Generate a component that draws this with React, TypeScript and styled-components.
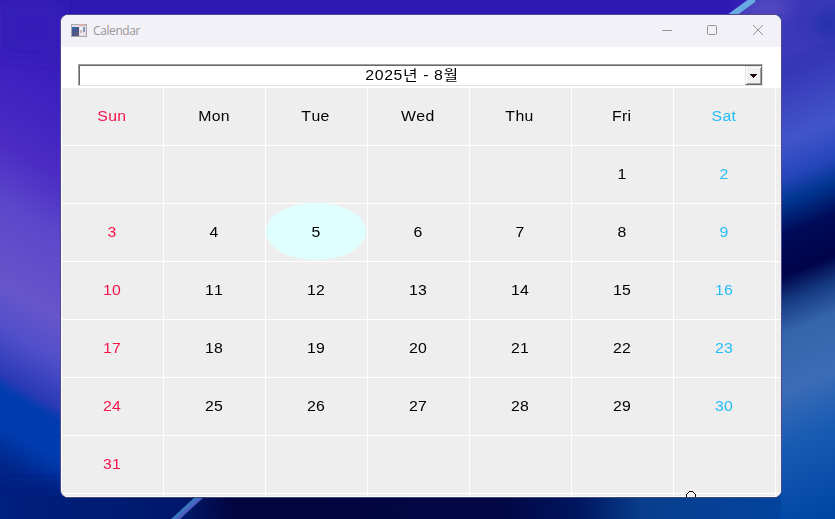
import React from 'react';
import styled, { createGlobalStyle, css } from 'styled-components';

const GlobalStyle = createGlobalStyle`
  * { box-sizing: border-box; }
  body { margin: 0; overflow: hidden; }
`;

const Desktop = styled.div`
  position: relative;
  width: 835px;
  height: 519px;
  padding: 14px 0 0 60px;
  overflow: hidden;
  background: #2f19b3;
`;

const WallpaperArt = styled.svg`
  position: absolute;
  inset: 0;
`;

const Window = styled.main`
  position: relative;
  display: flex;
  flex-direction: column;
  width: 722px;
  height: 484px;
  border: 1px solid #51498f;
  border-bottom-color: #3f4a72;
  border-radius: 8px;
  background: #fff;
  overflow: hidden;
`;

const TitleBar = styled.header`
  display: flex;
  flex: 0 0 32px;
  align-items: center;
  padding-left: 10px;
  background: #f3f1f8;
`;

const Title = styled.h1`
  flex: 1;
  margin: 0 0 0 6px;
  color: #9b9696;
  font: 400 12px/16px 'Open Sans', 'Noto Sans', sans-serif;
  letter-spacing: -0.4px;
`;

const WindowControls = styled.div`
  display: flex;
  margin-right: 0.5px;
`;

const WindowButton = styled.button`
  display: grid;
  place-items: center;
  width: 45.5px;
  height: 32px;
  padding: 0 0 2px;
  border: 0;
  background: none;
  color: #989494;
`;

const Toolbar = styled.div`
  flex: 0 0 40px;
  padding: 17px 18px 0 17px;
`;

const Combo = styled.div`
  display: flex;
  width: 685px;
  height: 22px;
  border: 1px solid;
  border-color: #a0a0a0 #e3e3e3 #e3e3e3 #a0a0a0;
  box-shadow: inset 1px 1px #696969;
`;

const glyphs = css`
  font-family: 'Liberation Sans', 'Noto Sans CJK KR', sans-serif;
  font-size: 14px;
  font-kerning: none;
  letter-spacing: 0.3px;
  transform: scaleX(1.13);
`;

const ComboValue = styled.span`
  flex: 1;
  color: #000;
  line-height: 20px;
  text-align: center;
  ${glyphs}
  letter-spacing: 0.55px;
`;

const DropButton = styled.button`
  display: grid;
  place-items: center;
  width: 17px;
  height: 19px;
  margin: 1px 0 0;
  padding: 1px 0 0;
  border: 1px solid;
  border-color: #e3e3e3 #696969 #696969 #e3e3e3;
  background: #f0f0f0;
  box-shadow: inset 1px 1px #fff, inset -1px -1px #a0a0a0;
`;

const Month = styled.section`
  display: grid;
  grid-template-columns: repeat(7, 102px) 1fr;
  grid-template-rows: repeat(7, 58px) 1fr;
  flex: 1;
  min-height: 0;
  padding-left: 1px;
  margin-top: 1px;
`;

const Cell = styled.div<{ $tone?: string }>`
  display: flex;
  align-items: center;
  justify-content: center;
  border: 0 solid #fff;
  border-width: 0 1px 1px 0;
  background: #eee;
  color: ${({ $tone }) => $tone ?? '#000'};
`;

const Edge = styled(Cell)`
  border-right: 0;
`;

const Label = styled.span<{ $heading?: boolean }>`
  position: relative;
  line-height: 18px;
  margin: 0 ${({ $heading }) => ($heading ? '1.2px' : '0.4px')} 2px 0;
  ${glyphs}
`;

const TodayCell = styled(Cell)`
  position: relative;

  &::before {
    content: '';
    position: absolute;
    left: 0;
    top: -1px;
    width: 100px;
    height: 57px;
    border-radius: 50%;
    background: #e0ffff;
  }
`;

const Spinner = styled.svg`
  position: absolute;
  left: 625px;
  top: 475px;
`;

const SUNDAY = '#f5154a';
const SATURDAY = '#26bcf8';
const DAYS = ['Sun', 'Mon', 'Tue', 'Wed', 'Thu', 'Fri', 'Sat'];
const FIRST_WEEKDAY = 5;
const TODAY = 5;
const toneOf = (column: number) =>
  column === 0 ? SUNDAY : column === 6 ? SATURDAY : undefined;

const Wallpaper = () => (
  <WallpaperArt width="835" height="519" viewBox="0 0 835 519" aria-hidden="true">
    <defs>
      <linearGradient id="left" x1="0" y1="0" x2="0" y2="519" gradientUnits="userSpaceOnUse">
        <stop offset="0" stopColor="#321ab4" />
        <stop offset=".15" stopColor="#3d20c0" />
        <stop offset=".3" stopColor="#4a2bc4" />
        <stop offset=".42" stopColor="#5c47ca" />
        <stop offset=".58" stopColor="#6755cb" />
        <stop offset=".66" stopColor="#514fca" />
        <stop offset=".75" stopColor="#2b3ab5" />
        <stop offset=".78" stopColor="#003cae" />
        <stop offset=".85" stopColor="#003caf" />
        <stop offset=".92" stopColor="#00278b" />
        <stop offset="1" stopColor="#001d7a" />
      </linearGradient>
      <linearGradient id="right" x1="0" y1="0" x2="0" y2="519" gradientUnits="userSpaceOnUse">
        <stop offset="0" stopColor="#3b38b9" />
        <stop offset=".12" stopColor="#3537b5" />
        <stop offset=".25" stopColor="#4355ca" />
        <stop offset=".32" stopColor="#2646bc" />
        <stop offset=".37" stopColor="#00358f" />
        <stop offset=".43" stopColor="#000b59" />
        <stop offset=".51" stopColor="#000449" />
        <stop offset=".56" stopColor="#153a82" />
        <stop offset=".62" stopColor="#3464ab" />
        <stop offset=".73" stopColor="#3d6cb6" />
        <stop offset=".84" stopColor="#175bb3" />
        <stop offset="1" stopColor="#0046a5" />
      </linearGradient>
      <linearGradient id="bottom" x1="0" y1="0" x2="835" y2="0" gradientUnits="userSpaceOnUse">
        <stop offset="0" stopColor="#00207e" />
        <stop offset=".22" stopColor="#00186b" />
        <stop offset=".28" stopColor="#02043e" />
        <stop offset=".6" stopColor="#020744" />
        <stop offset=".69" stopColor="#00155f" />
        <stop offset=".77" stopColor="#093e8d" />
        <stop offset="1" stopColor="#0046a5" />
      </linearGradient>
      <filter id="soft" x="-50%" y="-50%" width="200%" height="200%">
        <feGaussianBlur stdDeviation="8" />
      </filter>
      <filter id="edge"><feGaussianBlur stdDeviation=".6" /></filter>
    </defs>
    <rect width="835" height="519" fill="#2f19b3" />
    <rect width="100" height="640" fill="url(#left)" transform="translate(0 -16) skewY(30)" />
    <path d="M0 0H62V60L0 55Z" fill="#351bb9" filter="url(#soft)" />
    <path d="M0 485H70V519H0Z" fill="#001f80" filter="url(#soft)" />
    <path d="M752 0H835V519H728V15Z" fill="#0046a5" />
    <g transform="translate(0 328) skewY(-22)">
      <rect x="781" y="0" width="60" height="519" fill="url(#right)" />
    </g>
    <path d="M752 0H835V40L781 60V15H728Z" fill="#3b38b9" />
    <path d="M754 0H792L781 18L735 15Z" fill="#6755c8" opacity=".7" filter="url(#soft)" />
    <path d="M840 0V42L806 26Z" fill="#2430aa" filter="url(#soft)" />
    <rect y="496" width="780" height="23" fill="url(#bottom)" />
    <g filter="url(#edge)">
      <path d="M754 -1L728 18" stroke="#68a9e1" strokeWidth="6" />
      <path d="M206 491L169 525" stroke="#3974bd" strokeWidth="6" />
      <path d="M206 493L171 525" stroke="#5555c7" strokeWidth="2" />
    </g>
  </WallpaperArt>
);

const AppIcon = () => (
  <svg width="16" height="14" viewBox="0 0 16 14" shapeRendering="crispEdges" aria-hidden="true">
    <path fill="#aaa5ad" d="M0 0H16V13H0Z" />
    <path fill="#e8dbe2" d="M1 1H15V12H1Z" />
    <path fill="#d5b3b1" d="M8 0H14V2H8Z" />
    <path fill="#49578f" d="M1 3H8V12H1Z" />
    <path fill="#276bad" d="M1 3H5V5H1Z" />
    <path fill="#5b5980" d="M4 8H8V12H4Z" />
    <path fill="#e7f5fb" d="M9 3H12V6H9ZM10 9H12V11H10Z" />
    <path fill="#839bbb" d="M12 3H14V8H12Z" />
    <path fill="#d6b9c1" d="M9 6H11V9H9Z" />
  </svg>
);

export default function App() {
  return (
    <>
      <GlobalStyle />
      <Desktop>
        <Wallpaper />
        <Window>
          <TitleBar>
            <AppIcon />
            <Title>Calendar</Title>
            <WindowControls>
              <WindowButton aria-label="Minimize">
                <svg width="10" height="10"><path d="M0 5.5H10" stroke="currentColor" /></svg>
              </WindowButton>
              <WindowButton aria-label="Maximize">
                <svg width="10" height="10" fill="none">
                  <rect x=".5" y=".5" width="9" height="9" rx="1" stroke="currentColor" />
                </svg>
              </WindowButton>
              <WindowButton aria-label="Close">
                <svg width="10" height="10"><path d="M0 0L10 10M10 0L0 10" stroke="currentColor" /></svg>
              </WindowButton>
            </WindowControls>
          </TitleBar>
          <Toolbar>
            <Combo>
              <ComboValue>2025년 - 8월</ComboValue>
              <DropButton aria-label="Choose month">
                <svg width="7" height="4" shapeRendering="crispEdges">
                  <path d="M0 0H7V1H6V2H5V3H4V4H3V3H2V2H1V1H0Z" fill="#170006" />
                </svg>
              </DropButton>
            </Combo>
          </Toolbar>
          <Month>
            {DAYS.map((day, i) => (
              <Cell key={day} $tone={toneOf(i)}><Label $heading>{day}</Label></Cell>
            ))}
            <Edge />
            {Array.from({ length: 6 }, (_, week) => (
              <React.Fragment key={week}>
                {DAYS.map((day, column) => {
                  const date = week * 7 + column - FIRST_WEEKDAY + 1;
                  const Box = date === TODAY ? TodayCell : Cell;
                  return (
                    <Box key={day} $tone={toneOf(column)}>
                      {date > 0 && date <= 31 && <Label>{date}</Label>}
                    </Box>
                  );
                })}
                <Edge />
              </React.Fragment>
            ))}
            {DAYS.map((day) => <Cell key={day} />)}
            <Edge />
          </Month>
          <Spinner width="10" height="12" shapeRendering="crispEdges" aria-hidden="true">
            <path d="M3 1H7V2H3ZM2 2H3V3H2ZM7 2H8V3H7ZM1 3H2V4H1ZM8 3H9V4H8ZM0 4H1V7H0ZM9 4H10V7H9Z" fill="#170006" />
          </Spinner>
        </Window>
      </Desktop>
    </>
  );
}
